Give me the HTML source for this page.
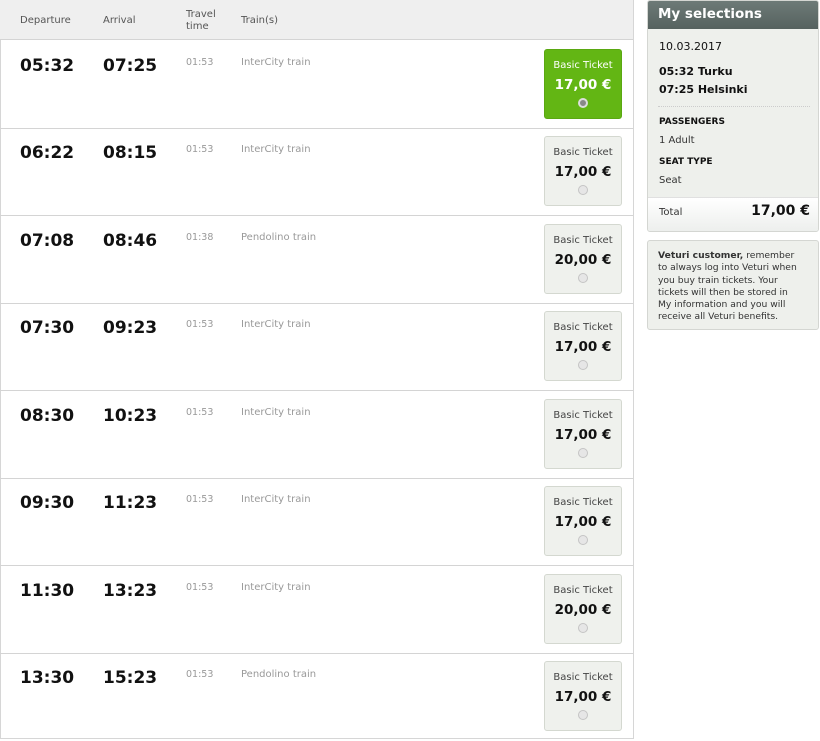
<!DOCTYPE html>
<html><head><meta charset="utf-8"><style>
*{box-sizing:border-box;margin:0;padding:0}
body{width:820px;height:739px;background:#fff;font-family:"DejaVu Sans","Liberation Sans",sans-serif;position:relative;overflow:hidden;color:#111}
.tbl{position:absolute;left:0;top:0;width:634px;height:739px;border:1px solid #d6d6d6;border-top:none}
.hd{position:absolute;left:-1px;top:0;width:633px;height:40px;background:#efefef;border-bottom:1px solid #d4d4d4;font-size:10px;color:#555}
.hd span{position:absolute}
.row{position:absolute;left:-1px;width:633px;height:88px;border-bottom:1px solid #d4d4d4}
.t{position:absolute;top:15px;font-size:17px;font-weight:bold;color:#111}
.tt{position:absolute;top:16px;left:186px;font-size:9.5px;color:#999}
.tr{position:absolute;top:16px;left:241px;font-size:10px;color:#999}
.tk{position:absolute;left:544px;top:8px;width:78px;height:70px;border:1px solid #d4d8d0;border-radius:3px;background:#eff1ed;text-align:center}
.tk .a{font-size:10px;color:#444;margin-top:10px}
.tk .p{font-size:13.5px;font-weight:bold;margin-top:6px;color:#111}
.tk .r{width:10px;height:10px;border-radius:50%;border:1px solid #c4c4c4;background:#e6e6e6;margin:5px auto 0}
.tk.sel{background:#63b614;border-color:#5aa812}
.tk.sel .a,.tk.sel .p{color:#fff}
.tk.sel .r{background:#888;border:2px solid #ddd}
.side{position:absolute;left:647px;top:0;width:172px;height:232px;background:#eef0ec;border:1px solid #d4d6d2;border-radius:3px;overflow:hidden}
.sh{height:28px;background:linear-gradient(#6d7a77,#56625f);color:#fff;font-weight:bold;font-size:13.5px;padding:5px 0 0 10px}
.side .x{position:absolute;left:11px;font-size:11px}
.tot{position:absolute;left:0;top:196px;width:172px;height:36px;background:linear-gradient(#fff,#eceeec);border-top:1px solid #e0e0e0}
.info{position:absolute;left:647px;top:240px;width:172px;height:90px;background:#eef0ec;border:1px solid #d4d6d2;border-radius:3px;padding:9px 0 0 10px;font-size:9.2px;line-height:12.3px;color:#333}
</style></head><body>
<div class="tbl">
<div class="hd"><span style="left:20px;top:15px">Departure</span><span style="left:103px;top:15px">Arrival</span><span style="left:186px;top:9px;line-height:12px">Travel<br>time</span><span style="left:241px;top:15px">Train(s)</span></div>
<div class="row" style="top:41px"><div class="t" style="left:20px">05:32</div><div class="t" style="left:103px">07:25</div><div class="tt">01:53</div><div class="tr">InterCity train</div><div class="tk sel"><div class="a">Basic Ticket</div><div class="p">17,00 €</div><div class="r"></div></div></div>
<div class="row" style="top:128px"><div class="t" style="left:20px">06:22</div><div class="t" style="left:103px">08:15</div><div class="tt">01:53</div><div class="tr">InterCity train</div><div class="tk"><div class="a">Basic Ticket</div><div class="p">17,00 €</div><div class="r"></div></div></div>
<div class="row" style="top:216px"><div class="t" style="left:20px">07:08</div><div class="t" style="left:103px">08:46</div><div class="tt">01:38</div><div class="tr">Pendolino train</div><div class="tk"><div class="a">Basic Ticket</div><div class="p">20,00 €</div><div class="r"></div></div></div>
<div class="row" style="top:303px"><div class="t" style="left:20px">07:30</div><div class="t" style="left:103px">09:23</div><div class="tt">01:53</div><div class="tr">InterCity train</div><div class="tk"><div class="a">Basic Ticket</div><div class="p">17,00 €</div><div class="r"></div></div></div>
<div class="row" style="top:391px"><div class="t" style="left:20px">08:30</div><div class="t" style="left:103px">10:23</div><div class="tt">01:53</div><div class="tr">InterCity train</div><div class="tk"><div class="a">Basic Ticket</div><div class="p">17,00 €</div><div class="r"></div></div></div>
<div class="row" style="top:478px"><div class="t" style="left:20px">09:30</div><div class="t" style="left:103px">11:23</div><div class="tt">01:53</div><div class="tr">InterCity train</div><div class="tk"><div class="a">Basic Ticket</div><div class="p">17,00 €</div><div class="r"></div></div></div>
<div class="row" style="top:566px"><div class="t" style="left:20px">11:30</div><div class="t" style="left:103px">13:23</div><div class="tt">01:53</div><div class="tr">InterCity train</div><div class="tk"><div class="a">Basic Ticket</div><div class="p">20,00 €</div><div class="r"></div></div></div>
<div class="row" style="top:653px;border-bottom:none"><div class="t" style="left:20px">13:30</div><div class="t" style="left:103px">15:23</div><div class="tt">01:53</div><div class="tr">Pendolino train</div><div class="tk"><div class="a">Basic Ticket</div><div class="p">17,00 €</div><div class="r"></div></div></div>
</div>
<div class="side">
<div class="sh">My selections</div>
<div class="x" style="top:39px">10.03.2017</div>
<div class="x" style="top:64px;font-weight:bold">05:32 Turku</div>
<div class="x" style="top:82px;font-weight:bold">07:25 Helsinki</div>
<div style="position:absolute;left:10px;top:105px;width:152px;border-top:1px dotted #ccc"></div>
<div class="x" style="top:116px;font-size:9px;font-weight:bold">PASSENGERS</div>
<div class="x" style="top:134px;font-size:10px;color:#333">1 Adult</div>
<div class="x" style="top:156px;font-size:9px;font-weight:bold">SEAT TYPE</div>
<div class="x" style="top:174px;font-size:10px;color:#333">Seat</div>
<div class="tot"><span style="position:absolute;left:11px;top:9px;font-size:10px;color:#333">Total</span><span style="position:absolute;right:10px;top:5px;font-size:14px;font-weight:bold">17,00 €</span></div>
</div>
<div class="info"><b>Veturi customer,</b> remember<br>to always log into Veturi when<br>you buy train tickets. Your<br>tickets will then be stored in<br>My information and you will<br>receive all Veturi benefits.</div>
</body></html>
